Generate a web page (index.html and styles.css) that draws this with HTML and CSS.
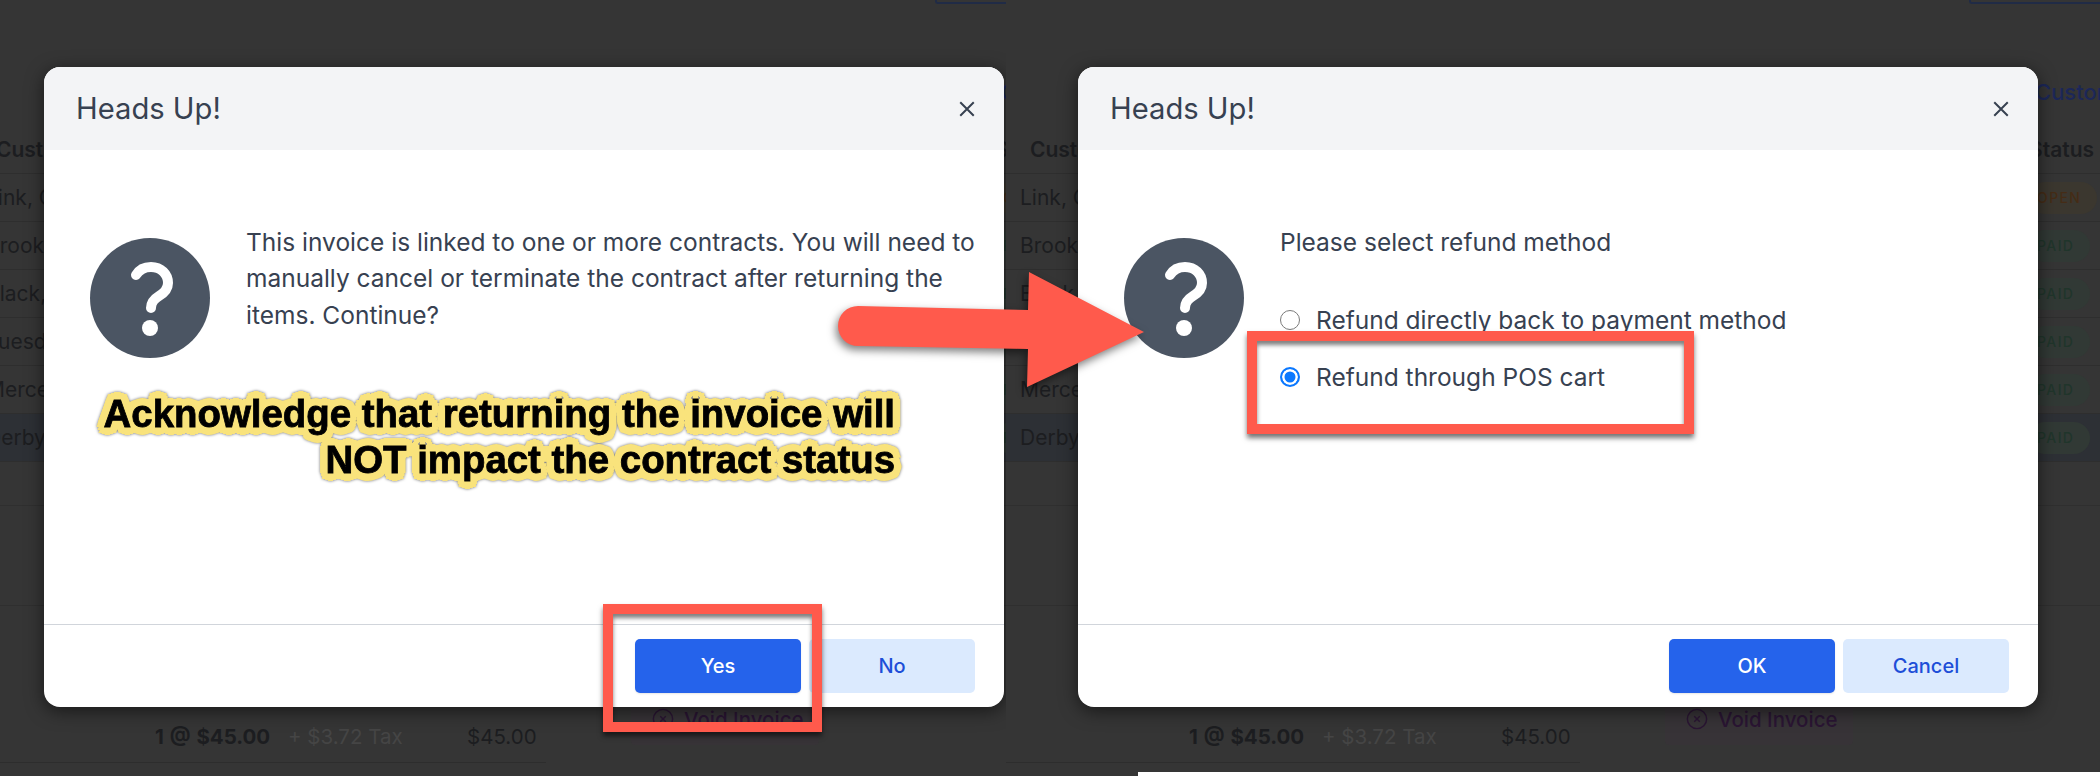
FILE: index.html
```html
<!DOCTYPE html>
<html>
<head>
<meta charset="UTF-8" />
<title>Heads Up</title>
<link rel="stylesheet" href="styles.css">
</head>

<body>

<div class="shot">

	<!-- first step -->
	<div class="panel panel-left">
		<div class="topbar"><span class="top-button"></span></div>
		<div class="customer-link">Custom</div>
		<div class="row row-head"><span class="name">Cust</span><span class="status">Status</span></div>
		<div class="row"><span class="name">Link, C</span><span class="pill pill-open">OPEN</span></div>
		<div class="row"><span class="name">Brook</span><span class="pill">PAID</span></div>
		<div class="row"><span class="name">Black,</span><span class="pill">PAID</span></div>
		<div class="row"><span class="name">Tuesd</span><span class="pill">PAID</span></div>
		<div class="row"><span class="name">Merce</span><span class="pill">PAID</span></div>
		<div class="row row-active"><span class="name">Derby,</span><span class="pill">PAID</span></div>
		<div class="rule-gap"></div>
		<div class="rule-gap rule-gap-tall"></div>
		<div class="item">
			<div class="item-line">
				<span class="item-qty">1 @ $45.00</span>
				<span class="item-tax">+ $3.72 Tax</span>
				<span class="item-total">$45.00</span>
			</div>
			<div class="void-button">
				<svg class="void-icon" viewBox="0 0 24 24"><circle cx="12" cy="12" r="10.5"/><path d="M9 9l6 6M15 9l-6 6"/></svg>
				Void Invoice
			</div>
		</div>

		<div class="modal">
			<div class="modal-head">
				<h2 class="modal-title">Heads Up!</h2>
				<svg class="modal-close" viewBox="0 0 16 16"><path d="M2 2l12 12M14 2L2 14"/></svg>
			</div>
			<div class="modal-body">
				<svg class="question" viewBox="0 0 120 120">
					<circle class="question-disc" cx="60" cy="60" r="60"/>
					<path class="question-hook" d="M46 37C49 32 54 29 61 29C71 29 78 36 78 45C78 51 74 55 69 58C64 61 61 64 61 70"/>
					<circle class="question-dot" cx="60" cy="90" r="8"/>
				</svg>
				<p class="modal-text">This invoice is linked to one or more contracts. You will need to manually cancel or terminate the contract after returning the items. Continue?</p>
			</div>
			<div class="modal-foot">
				<button class="btn btn-primary">Yes</button>
				<button class="btn btn-soft">No</button>
			</div>
		</div>
	</div>

	<!-- second step -->
	<div class="panel panel-right">
		<div class="topbar"><span class="top-button"></span></div>
		<div class="customer-link">Custom</div>
		<div class="row row-head"><span class="name">Custo</span><span class="status">Status</span></div>
		<div class="row"><span class="name">Link, C</span><span class="pill pill-open">OPEN</span></div>
		<div class="row"><span class="name">Brook</span><span class="pill">PAID</span></div>
		<div class="row"><span class="name">Black,</span><span class="pill">PAID</span></div>
		<div class="row"><span class="name">Tuesd</span><span class="pill">PAID</span></div>
		<div class="row"><span class="name">Merce</span><span class="pill">PAID</span></div>
		<div class="row row-active"><span class="name">Derby,</span><span class="pill">PAID</span></div>
		<div class="rule-gap"></div>
		<div class="rule-gap rule-gap-tall"></div>
		<div class="item">
			<div class="item-line">
				<span class="item-qty">1 @ $45.00</span>
				<span class="item-tax">+ $3.72 Tax</span>
				<span class="item-total">$45.00</span>
			</div>
			<div class="void-button">
				<svg class="void-icon" viewBox="0 0 24 24"><circle cx="12" cy="12" r="10.5"/><path d="M9 9l6 6M15 9l-6 6"/></svg>
				Void Invoice
			</div>
		</div>
		<div class="page-cutoff"></div>

		<div class="modal">
			<div class="modal-head">
				<h2 class="modal-title">Heads Up!</h2>
				<svg class="modal-close" viewBox="0 0 16 16"><path d="M2 2l12 12M14 2L2 14"/></svg>
			</div>
			<div class="modal-body">
				<svg class="question" viewBox="0 0 120 120">
					<circle class="question-disc" cx="60" cy="60" r="60"/>
					<path class="question-hook" d="M46 37C49 32 54 29 61 29C71 29 78 36 78 45C78 51 74 55 69 58C64 61 61 64 61 70"/>
					<circle class="question-dot" cx="60" cy="90" r="8"/>
				</svg>
				<div class="modal-text">
					<p class="refund-title">Please select refund method</p>
					<div class="refund-option"><span class="radio"></span>Refund directly back to payment method</div>
					<div class="refund-option"><span class="radio radio-on"></span>Refund through POS cart</div>
				</div>
			</div>
			<div class="modal-foot">
				<button class="btn btn-primary">OK</button>
				<button class="btn btn-soft">Cancel</button>
			</div>
		</div>
	</div>

	<!-- annotations drawn on top of the screenshots -->
	<div class="note">Acknowledge that returning the invoice will<br>NOT impact the contract status</div>
	<div class="callout callout-yes"></div>
	<div class="callout callout-refund"></div>
	<svg class="arrow" viewBox="0 0 330 140">
		<path d="M28 34L198 38L199 0L314 60L197 115L198 77L28 74A20 20 0 0 1 28 34Z"/>
	</svg>

</div>

</body>
</html>
```

FILE: styles.css
```css
* {
	box-sizing: border-box;
}

body {
	margin: 0;
	font-family: Inter, "Noto Sans", sans-serif;
	background: #353535;
}

.shot {
	position: relative;
	display: flex;
	width: 2100px;
	height: 776px;
	overflow: hidden;
}

/* dimmed page behind the dialogs */
.panel {
	position: relative;
	overflow: hidden;
	height: 776px;
	background: #353535;
	color: #1c1d20;
	font-size: 21px;
}

.panel-left {
	--shift: -14px;
	--modal-left: 44px;
	width: 1006px;
}

.panel-right {
	--shift: 14px;
	--modal-left: 72px;
	width: 1094px;
}

.topbar {
	display: flex;
	height: 4px;
	margin-left: calc(var(--shift) + 949px);
}

.top-button {
	width: 200px;
	height: 4px;
	border: 2px solid #202b46;
	border-top: 0;
	border-right: 0;
	border-bottom-left-radius: 3px;
}

.customer-link {
	height: 122px;
	margin-left: calc(var(--shift) + 1015px);
	padding-top: 75px;
	color: #1c2758;
	font-size: 22px;
	font-weight: 500;
	white-space: nowrap;
}

.row {
	display: flex;
	align-items: center;
	height: 48px;
	border-bottom: 1px solid #2e2e2e;
	white-space: nowrap;
}

.row-active {
	background: #2d3035;
}

.row-head {
	font-weight: 600;
}

.name {
	width: 1009px;
	flex: none;
	margin-left: var(--shift);
}

.row-head .name {
	padding-left: 10px;
}

.pill {
	padding: 7px 16px 7px 8px;
	border-radius: 16px;
	background: #313935;
	color: #20352b;
	font-size: 14px;
	line-height: 18px;
	letter-spacing: 1.4px;
	font-weight: 500;
}

.pill-open {
	background: #3b372f;
	color: #452c16;
}

.rule-gap {
	height: 44px;
	border-bottom: 1px solid #2f2f2f;
}

.rule-gap-tall {
	height: 100px;
}

.item {
	display: flex;
	height: 157px;
}

.item-line {
	flex: none;
	display: flex;
	width: calc(var(--shift) + 560px);
	height: 157px;
	padding: 118px 0 0 calc(var(--shift) + 169px);
	border-bottom: 1px solid #2d2d2d;
	font-size: 20.5px;
	white-space: nowrap;
}

.item-qty {
	width: 133px;
	font-weight: 700;
	word-spacing: 1px;
}

.item-tax {
	width: 179px;
	color: #454545;
}

.void-button {
	display: flex;
	align-items: center;
	gap: 10px;
	width: 188px;
	height: 52px;
	margin: 87px 0 0 85px;
	padding-left: 21px;
	border-radius: 4px;
	background: #373337;
	color: #2a1533;
	font-size: 20.5px;
	font-weight: 500;
	white-space: nowrap;
}

.void-icon {
	width: 22px;
	height: 22px;
	fill: none;
	stroke: #2a1533;
	stroke-width: 1.6;
}

.page-cutoff {
	position: absolute;
	left: 132px;
	right: 0;
	top: 772px;
	height: 4px;
	background: #fff;
}

/* dialog */
.modal {
	position: absolute;
	left: var(--modal-left);
	top: 67px;
	width: 960px;
	height: 640px;
	display: flex;
	flex-direction: column;
	border-radius: 16px;
	overflow: hidden;
	background: #fff;
	color: #374151;
	box-shadow: 0 4px 18px rgba(0, 0, 0, 0.55);
}

.modal-head {
	display: flex;
	align-items: center;
	justify-content: space-between;
	flex: none;
	height: 83px;
	padding: 0 28px 0 32px;
	background: #f3f4f6;
}

.modal-title {
	margin: 0;
	font-size: 29.2px;
	font-weight: 400;
}

.modal-close {
	width: 18px;
	height: 18px;
	fill: none;
	stroke: #374151;
	stroke-width: 1.8;
}

.modal-body {
	flex: 1;
	display: flex;
	align-items: flex-start;
	gap: 36px;
	padding: 74px 18px 0 46px;
}

.question {
	flex: none;
	width: 120px;
	height: 120px;
	margin-top: 14px;
}

.question-disc {
	fill: #4b5563;
}

.question-hook {
	fill: none;
	stroke: #fff;
	stroke-width: 10;
	stroke-linecap: round;
}

.question-dot {
	fill: #fff;
}

.modal-text {
	margin: 0;
	font-size: 24.5px;
	line-height: 36.3px;
}

.refund-title {
	margin: 0 0 42px;
}

.refund-option {
	display: flex;
	align-items: center;
	gap: 16px;
	height: 36px;
	margin-bottom: 21px;
	white-space: nowrap;
}

.radio {
	width: 20px;
	height: 20px;
	border: 1.5px solid #7a7a7a;
	border-radius: 50%;
	background: #fff;
}

.radio-on {
	border: 2px solid #0b78ff;
	box-shadow: inset 0 0 0 2.5px #fff;
	background: #0b78ff;
}

.modal-foot {
	flex: none;
	display: flex;
	justify-content: flex-end;
	gap: 8px;
	height: 83px;
	padding: 14px 29px 0 0;
	border-top: 1px solid #d1d5db;
}

.btn {
	width: 166px;
	height: 54px;
	border: 0;
	border-radius: 5px;
	font-family: inherit;
	font-size: 20px;
	font-weight: 500;
}

.btn-primary {
	background: #2563eb;
	color: #fff;
	box-shadow: 0 1px 2px rgba(0, 0, 0, 0.1);
}

.btn-soft {
	background: #dbeafe;
	color: #1d4ed8;
}

/* annotations */
.note {
	position: absolute;
	left: 60px;
	top: 391px;
	width: 835px;
	text-align: right;
	color: #000;
	font-family: "Liberation Sans", Arial, sans-serif;
	font-size: 38.4px;
	font-weight: 700;
	line-height: 46px;
	white-space: nowrap;
	-webkit-text-stroke: 0.8px #000;
	filter: drop-shadow(0 0 1.5px rgba(0, 0, 0, 0.55));
	text-shadow:
		8px 0 0 #f9e37c, -8px 0 0 #f9e37c, 0 8px 0 #f9e37c, 0 -8px 0 #f9e37c,
		6px 6px 0 #f9e37c, -6px 6px 0 #f9e37c, 6px -6px 0 #f9e37c, -6px -6px 0 #f9e37c,
		7px 3px 0 #f9e37c, -7px 3px 0 #f9e37c, 7px -3px 0 #f9e37c, -7px -3px 0 #f9e37c,
		3px 7px 0 #f9e37c, -3px 7px 0 #f9e37c, 3px -7px 0 #f9e37c, -3px -7px 0 #f9e37c,
		4px 0 0 #f9e37c, -4px 0 0 #f9e37c, 0 4px 0 #f9e37c, 0 -4px 0 #f9e37c;
}

.callout {
	position: absolute;
	border: 10.5px solid #ff5a4c;
	box-shadow: 0 4px 5px rgba(0, 0, 0, 0.55), inset 0 4px 4px rgba(0, 0, 0, 0.5);
}

.callout-yes {
	left: 603px;
	top: 604px;
	width: 219px;
	height: 128px;
}

.callout-refund {
	left: 1247px;
	top: 331px;
	width: 447px;
	height: 103px;
}

.arrow {
	position: absolute;
	left: 830px;
	top: 272px;
	width: 330px;
	height: 140px;
	fill: #ff5a4c;
	filter: drop-shadow(-2px 4px 4px rgba(0, 0, 0, 0.5));
}
```
